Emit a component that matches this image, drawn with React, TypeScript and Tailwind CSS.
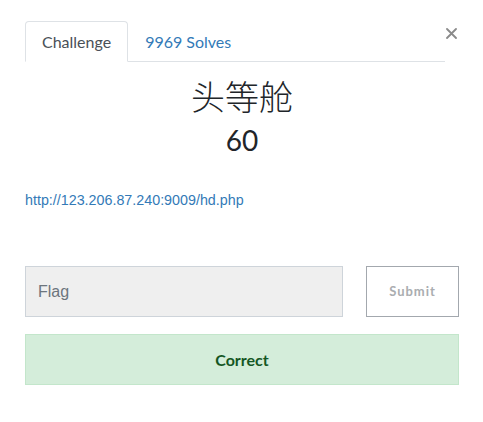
import { useState } from "react";

const App = () => {
  const [flag, setFlag] = useState("");

  return (
    <div className="w-[483px] h-[422px] bg-white pl-[25px] pr-[24px] pt-[21px] font-['Lato',sans-serif]">
      {/* Tabs header */}
      <div className="flex items-start">
        <ul className="flex-1 flex border-b border-[#dee2e6]">
          <li className="-mb-px h-[41px] px-4 flex items-center border border-[#dee2e6] border-b-white rounded-t-[4px] text-[16px] text-[#495057] bg-white">
            Challenge
          </li>
          <li className="-mb-px h-[41px] px-4 flex items-center border border-transparent text-[16px] text-[#337ab7]">
            9969 Solves
          </li>
        </ul>
        <button className="w-[14px] flex justify-end pt-[7px] cursor-pointer">
          <svg width="11" height="11" viewBox="0 0 11 11" className="mr-[2px]">
            <path
              d="M1 1 L10 10 M10 1 L1 10"
              stroke="#8a8a8a"
              strokeWidth="1.8"
              strokeLinecap="round"
            />
          </svg>
        </button>
      </div>

      {/* Challenge body */}
      <div className="flex flex-col items-center text-[#212529]">
        <h3 className="mt-[15px] text-[34px] leading-[1.2] font-light font-['Lato','Noto_Sans_CJK_SC',sans-serif]">
          头等舱
        </h3>
        <h4 className="mt-[6px] text-[28px] leading-[1.2]">60</h4>
      </div>

      <div className="mt-[33px] text-[14.3px] leading-[20px] font-['Liberation_Sans',Arial,sans-serif]">
        <a href="#" className="text-[#337ab7]">
          http://123.206.87.240:9009/hd.php
        </a>
      </div>

      {/* Flag form */}
      <div className="mt-[56px] flex gap-[23px]">
        <input
          value={flag}
          onChange={(e) => setFlag(e.target.value)}
          placeholder="Flag"
          className="w-[318px] h-[51px] px-[12px] bg-[#efefef] border border-[#ced4da] text-[16px] font-['Liberation_Sans',Arial,sans-serif] placeholder:text-[#6c757d] outline-none"
        />
        <button className="w-[93px] h-[51px] border border-[#a3a8ae] text-[13px] font-bold tracking-[1px] text-[#aaadb0] bg-white">
          Submit
        </button>
      </div>

      {/* Result */}
      <div className="mt-[17px] h-[51px] flex items-center justify-center bg-[#d4edda] border border-[#c3e6cb] text-[#155724] text-[16px] font-bold">
        Correct
      </div>
    </div>
  );
};

export default App;
